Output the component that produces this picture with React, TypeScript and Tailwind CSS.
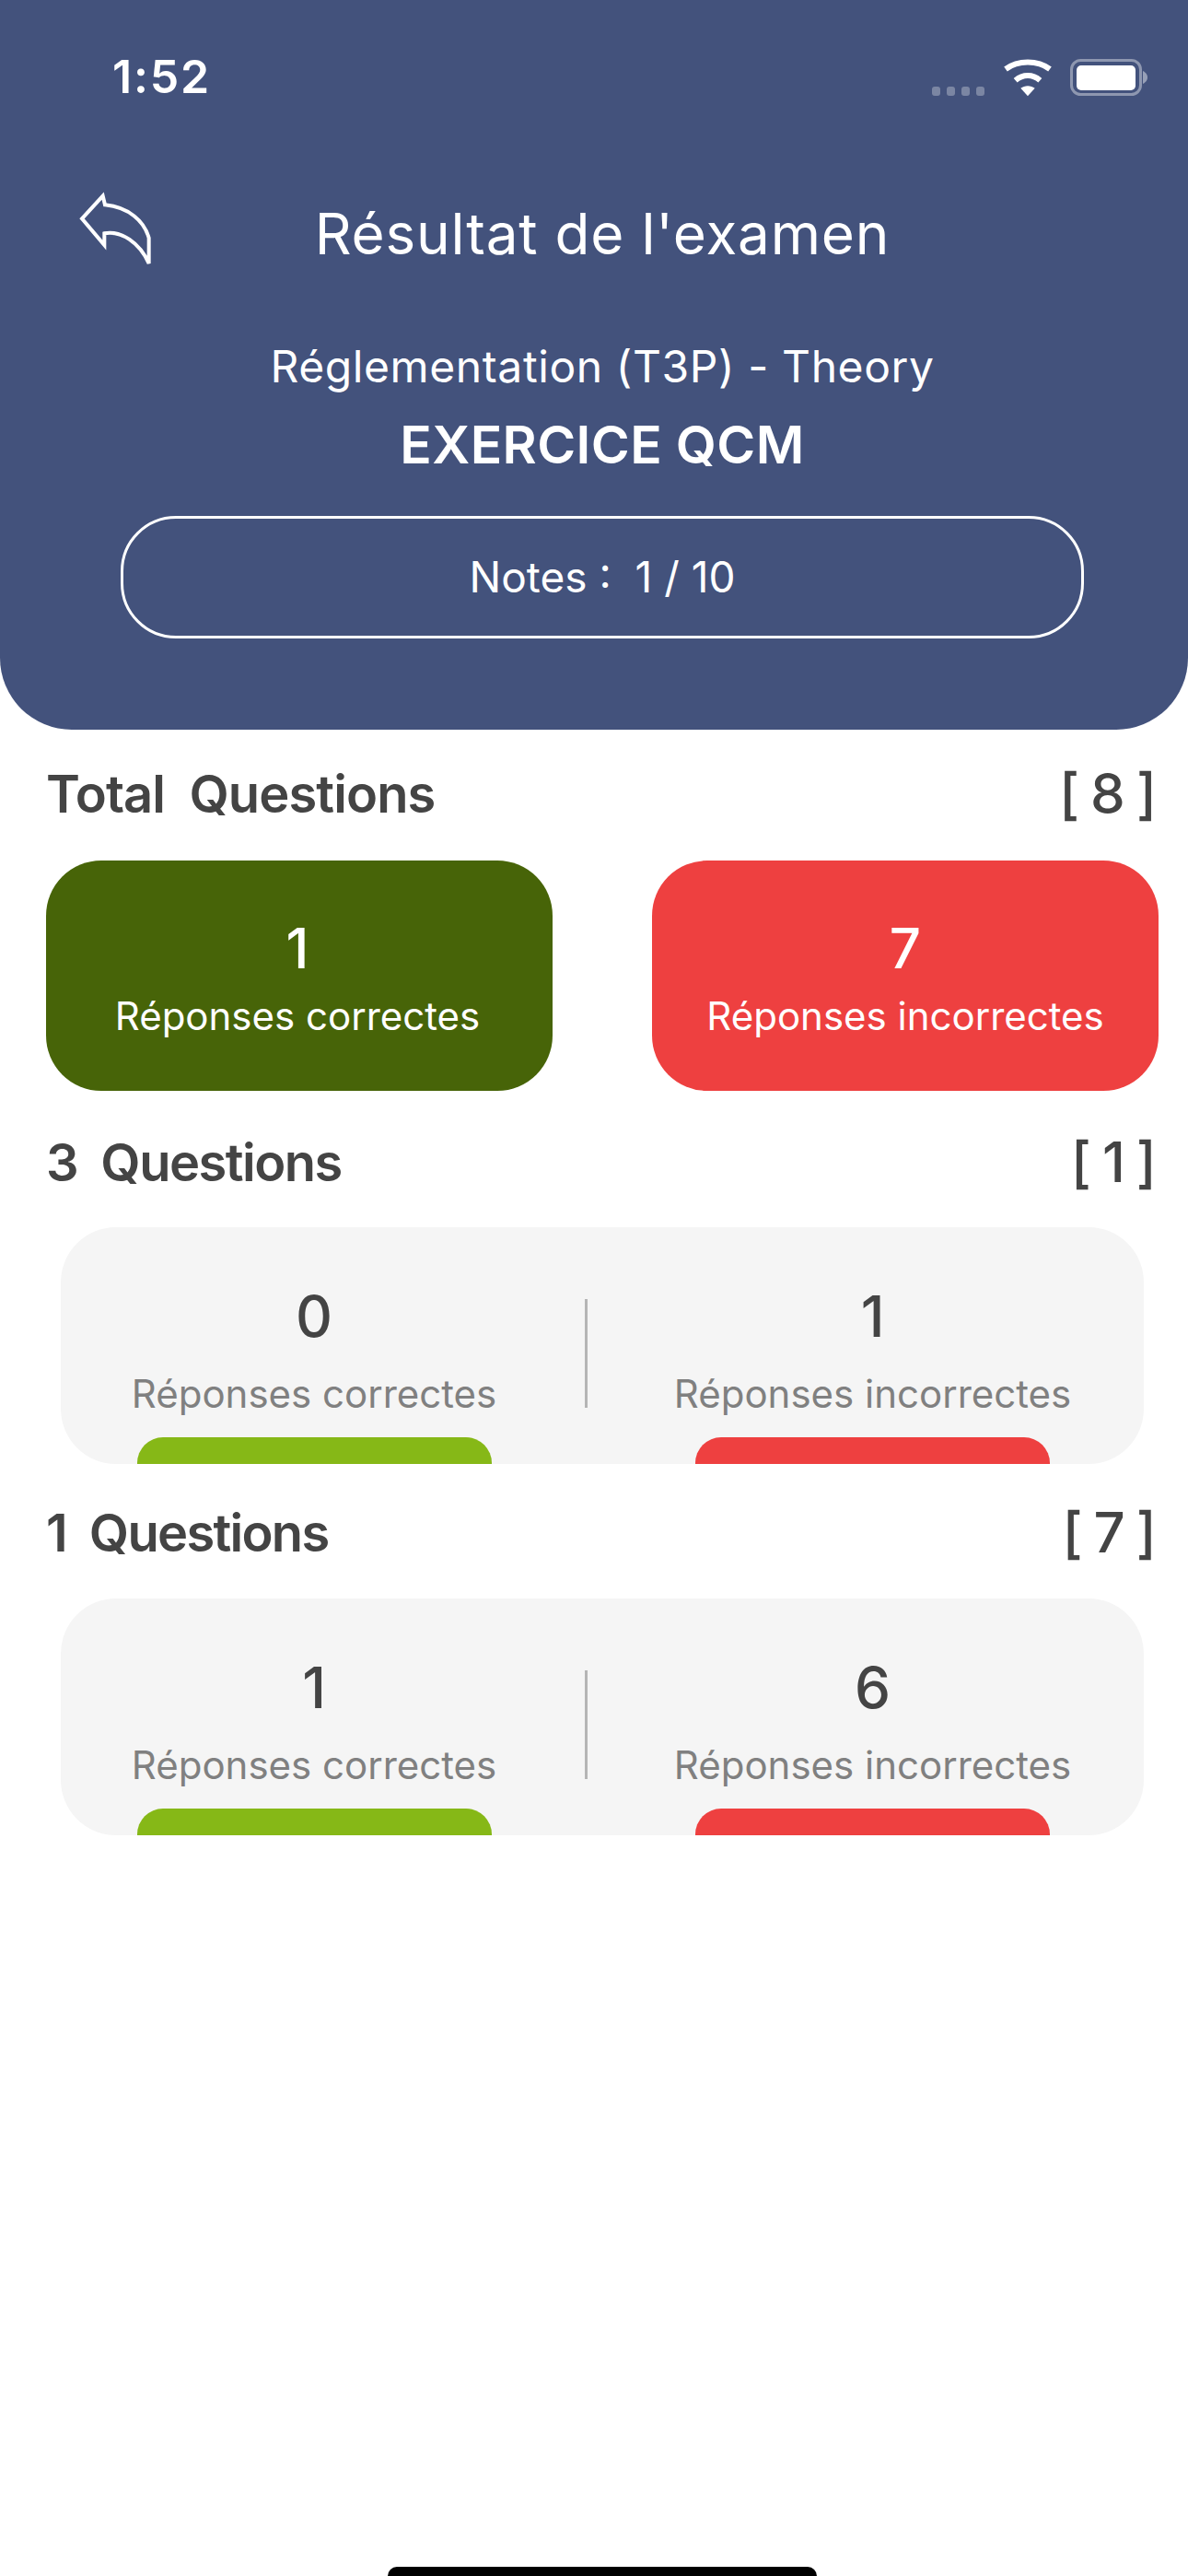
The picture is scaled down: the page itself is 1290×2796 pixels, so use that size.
const font = { fontFamily: '"Inter", "Noto Sans", sans-serif' };

function Wifi() {
  return (
    <svg width="56" height="42" viewBox="0 0 168 126" fill="none">
      <path d="M12 36 C52 6 116 6 156 36" stroke="white" strokeWidth="18" />
      <path d="M44 73 C68 52 100 52 124 73" stroke="white" strokeWidth="18" />
      <path d="M61 98 C74 88 94 88 107 98 L84 124 Z" fill="white" />
    </svg>
  );
}

function Battery() {
  return (
    <svg width="84" height="40" viewBox="0 0 84 40" fill="none">
      <rect x="1.5" y="1.5" width="75" height="37" rx="10" stroke="white" strokeOpacity="0.4" strokeWidth="3" />
      <rect x="7" y="7" width="64" height="27" rx="5" fill="white" />
      <path d="M79 13 C83 15 84 18 84 20 C84 22 83 25 79 27 Z" fill="white" fillOpacity="0.45" />
    </svg>
  );
}

function Back() {
  return (
    <svg width="130" height="110" viewBox="0 0 390 330" fill="none" className="shrink-0">
      <path
        d="M155 68 L87 142 L160 228 L160 190 C215 180 275 220 305 288 L305 205 C290 150 240 105 162 97 Z"
        stroke="white"
        strokeWidth="12"
        strokeLinejoin="miter"
      />
    </svg>
  );
}

function TotalCard({ value, label, bg, inset }: { value: string; label: string; bg: string; inset: string }) {
  return (
    <div className={`w-[550px] h-[250px] rounded-[60px] flex flex-col items-center text-white ${bg} ${inset}`}>
      <div className="mt-[57px] text-[60px] leading-[76px] font-medium">{value}</div>
      <div className="mt-[12px] text-[42px] leading-[48px]">{label}</div>
    </div>
  );
}

function SectionTitle({ title, count, tracking }: { title: string; count: string; tracking: string }) {
  return (
    <div className="flex items-center justify-between h-[70px] pl-[50px] pr-[36px] text-[#444444]">
      <div className={`text-[56px] leading-[70px] font-semibold whitespace-pre ${tracking}`}>{title}</div>
      <div className="text-[60px] leading-[70px] font-medium tracking-[-2px] -mt-[2px] whitespace-pre">{count}</div>
    </div>
  );
}

function Side({ value, label, bar, className }: { value: string; label: string; bar: string; className: string }) {
  return (
    <div className={`flex flex-col items-center ${className}`}>
      <div className="mt-[59px] h-[76px] text-[62px] leading-[76px] font-medium text-[#444444]">{value}</div>
      <div className="mt-[21px] text-[42px] leading-[50px] text-[#808080] whitespace-nowrap">{label}</div>
      <div className={`mt-[22px] w-[385px] h-[29px] rounded-t-[28px] ${bar}`} />
    </div>
  );
}

function StatCard({ left, right, top }: { left: string; right: string; top: string }) {
  return (
    <div className={`ml-[66px] mr-[48px] h-[257px] rounded-[60px] bg-[#f5f5f5] overflow-hidden flex ${top}`}>
      <Side value={left} label="Réponses correctes" bar="bg-[#86b817]" className="w-[551px]" />
      <div className="ml-[19px] mt-[78px] h-[118px] w-[3px] bg-[#b5b5b5]" />
      <Side value={right} label="Réponses incorrectes" bar="bg-[#ee4040]" className="ml-[15px] w-[590px]" />
    </div>
  );
}

export default function App() {
  return (
    <div style={font} className="relative w-[1290px] h-[2796px] bg-white overflow-hidden">
      <header className="h-[792px] bg-[#43527c] rounded-b-[78px] text-white flex flex-col">
        <div className="flex items-center h-[44px] mt-[62px] pl-[122px] pr-[44px]">
          <div className="text-[50px] leading-[44px] font-semibold tracking-[1.8px] -mt-[2px]">1:52</div>
          <div className="flex-1" />
          <div className="flex gap-[7px] items-end h-[40px] mr-[19px]">
            <span className="w-[9px] h-[10px] rounded-[3px] bg-white/30" />
            <span className="w-[9px] h-[10px] rounded-[3px] bg-white/30" />
            <span className="w-[9px] h-[10px] rounded-[3px] bg-white/30" />
            <span className="w-[9px] h-[10px] rounded-[3px] bg-white/30" />
          </div>
          <Wifi />
          <div className="ml-[18px]">
            <Battery />
          </div>
        </div>
        <div className="flex items-center mt-[84px] pl-[60px] pr-[172px] h-[110px]">
          <Back />
          <div className="flex-1 text-center text-[62px] leading-[70px] tracking-[0.8px] pt-[18px]">Résultat de l'examen</div>
        </div>
        <div className="pl-[18px] flex flex-col items-center">
          <div className="mt-[68px] h-[60px] text-[48px] leading-[60px] tracking-[0.6px]">Réglementation (T3P) - Theory</div>
          <div className="mt-[20px] h-[70px] text-[57px] leading-[70px] font-semibold tracking-[0.4px]">EXERCICE QCM</div>
          <div className="mt-[42px] w-[1046px] h-[133px] rounded-[60px] border-[3px] border-white flex items-center justify-center text-[46px] whitespace-pre">
            Notes :  1 / 10
          </div>
        </div>
      </header>

      <div className="mt-[35px]">
        <SectionTitle title="Total  Questions" count="[ 8 ]" tracking="tracking-[-0.9px]" />
      </div>
      <div className="flex justify-between pl-[50px] pr-[32px] mt-[37px]">
        <TotalCard value="1" label="Réponses correctes" bg="bg-[#476408]" inset="pr-[4px]" />
        <TotalCard value="7" label="Réponses incorrectes" bg="bg-[#ee4040]" inset="pr-0" />
      </div>
      <div className="mt-[43px]">
        <SectionTitle title="3  Questions" count="[ 1 ]" tracking="tracking-[-1.5px]" />
      </div>
      <StatCard left="0" right="1" top="mt-[35px]" />
      <div className="mt-[40px]">
        <SectionTitle title="1  Questions" count="[ 7 ]" tracking="tracking-[-1.7px]" />
      </div>
      <StatCard left="1" right="6" top="mt-[36px]" />

      <div className="absolute bottom-0 left-[421px] w-[466px] h-[10px] bg-black rounded-t-[10px]" />
    </div>
  );
}
